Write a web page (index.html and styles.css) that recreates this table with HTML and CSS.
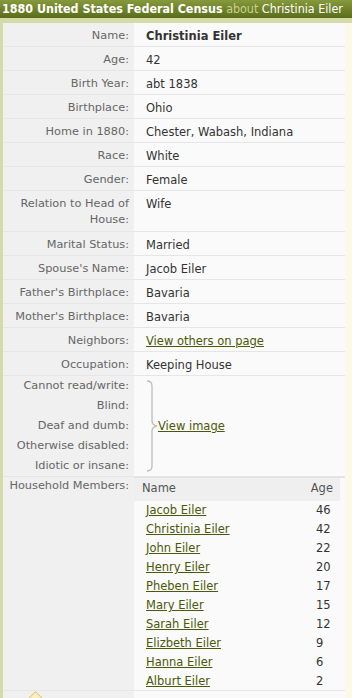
FILE: index.html
```html
<!DOCTYPE html>
<html>
<head>
<meta charset="utf-8">
<link rel="stylesheet" href="styles.css">
</head>
<body>
<div class="header"><span class="title">1880 United States Federal Census</span> <span class="about">about</span> <span class="who">Christinia Eiler</span></div>
<div class="panel">
  <div class="rec">
    <div class="row"><div class="lab">Name:</div><div class="val"><b>Christinia Eiler</b></div></div>
    <div class="row"><div class="lab">Age:</div><div class="val">42</div></div>
    <div class="row"><div class="lab">Birth Year:</div><div class="val">abt 1838</div></div>
    <div class="row"><div class="lab">Birthplace:</div><div class="val">Ohio</div></div>
    <div class="row"><div class="lab">Home in 1880:</div><div class="val">Chester, Wabash, Indiana</div></div>
    <div class="row"><div class="lab">Race:</div><div class="val">White</div></div>
    <div class="row"><div class="lab">Gender:</div><div class="val">Female</div></div>
    <div class="row tall"><div class="lab">Relation to Head of House:</div><div class="val">Wife</div></div>
    <div class="row"><div class="lab">Marital Status:</div><div class="val">Married</div></div>
    <div class="row"><div class="lab">Spouse's Name:</div><div class="val">Jacob Eiler</div></div>
    <div class="row"><div class="lab">Father's Birthplace:</div><div class="val">Bavaria</div></div>
    <div class="row"><div class="lab">Mother's Birthplace:</div><div class="val">Bavaria</div></div>
    <div class="row"><div class="lab">Neighbors:</div><div class="val"><a href="#">View others on page</a></div></div>
    <div class="row"><div class="lab">Occupation:</div><div class="val">Keeping House</div></div>
    <div class="row dis">
      <div class="lab stack">
        <div>Cannot read/write:</div>
        <div>Blind:</div>
        <div>Deaf and dumb:</div>
        <div>Otherwise disabled:</div>
        <div>Idiotic or insane:</div>
      </div>
      <div class="val bracketval">
        <svg class="brace" width="12" height="92" viewBox="0 0 12 92"><path d="M1 1 Q6 1 6 6 L6 41 Q6 45 11 46 Q6 47 6 51 L6 86 Q6 91 1 91" fill="none" stroke="#bdbdbd" stroke-width="1.3"/></svg>
        <a href="#">View image</a>
      </div>
    </div>
    <div class="row hh">
      <div class="lab">Household Members:</div>
      <div class="val members">
        <div class="mhead"><span>Name</span><span>Age</span></div>
        <div class="mrow"><a href="#">Jacob Eiler</a><span>46</span></div>
        <div class="mrow"><a href="#">Christinia Eiler</a><span>42</span></div>
        <div class="mrow"><a href="#">John Eiler</a><span>22</span></div>
        <div class="mrow"><a href="#">Henry Eiler</a><span>20</span></div>
        <div class="mrow"><a href="#">Pheben Eiler</a><span>17</span></div>
        <div class="mrow"><a href="#">Mary Eiler</a><span>15</span></div>
        <div class="mrow"><a href="#">Sarah Eiler</a><span>12</span></div>
        <div class="mrow"><a href="#">Elizbeth Eiler</a><span>9</span></div>
        <div class="mrow"><a href="#">Hanna Eiler</a><span>6</span></div>
        <div class="mrow"><a href="#">Alburt Eiler</a><span>2</span></div>
      </div>
    </div>
    <div class="row foot"><div class="lab"><span class="tip"></span></div><div class="val"></div></div>
  </div>
</div>
</body>
</html>
```
FILE: styles.css
```css
html, body {
  margin: 0;
  padding: 0;
}
body {
  background: #fdf9e8;
  font-family: "DejaVu Sans", Verdana, sans-serif;
  font-size: 11.5px;
  color: #333;
  width: 352px;
  height: 698px;
  overflow: hidden;
}
.header {
  height: 18px;
  line-height: 18px;
  padding-left: 2px;
  background: linear-gradient(#86993c, #5a6d1b);
  color: #fff;
  font-family: "DejaVu Sans Condensed", "DejaVu Sans", sans-serif;
  font-size: 12.4px;
  white-space: nowrap;
  overflow: hidden;
  border-bottom: 5px solid #d4dba8;
}
.title { font-weight: bold; }
.about { color: #c9d18e; }
.panel {
  width: 342px;
  border-left: 3px solid #d4dba8;
}
.rec {
  display: flex;
  flex-direction: column;
}
.row {
  display: grid;
  grid-template-columns: 131px 211px;
  border-bottom: 1px solid #e6e6e6;
}
.lab {
  background: #f0f0f0;
  color: #666;
  text-align: right;
  padding: 5px 5px 2px 4px;
  line-height: 16px;
  font-size: 11.3px;
}
.val {
  background: #fafafa;
  padding: 5px 6px 2px 12px;
  line-height: 16px;
}
.tall .lab, .tall .val {
  padding-bottom: 3px;
}
a {
  color: #4a5808;
  text-decoration: underline;
}
.dis .lab {
  padding-top: 0;
  padding-bottom: 0;
}
.stack div {
  line-height: 20px;
}
.bracketval {
  display: flex;
  align-items: center;
  padding: 0 0 0 12px;
}
.hh .lab {
  padding-top: 1px;
}
.members {
  padding: 0 5px 0 0;
  background: #fafafa;
  border-top: 1px solid #e3e3e3;
}
.mhead {
  display: flex;
  justify-content: space-between;
  background: #efefef;
  color: #555;
  padding: 2px 7px 5px 8px;
  line-height: 16px;
}
.mrow {
  display: grid;
  grid-template-columns: 170px 1fr;
  padding-left: 12px;
  line-height: 19px;
}
.foot {
  border-bottom: 0;
  border-top: 1px solid #e6e6e6;
  margin-top: -2px;
}
.foot .lab {
  position: relative;
  height: 12px;
  padding: 0;
}
.foot .val {
  height: 12px;
  padding: 0;
}
.tip {
  position: absolute;
  left: 25px;
  top: 3px;
  width: 13px;
  height: 13px;
  background: #f8f0c4;
  border: 1px solid #e3c57a;
  transform: rotate(45deg);
}
```
